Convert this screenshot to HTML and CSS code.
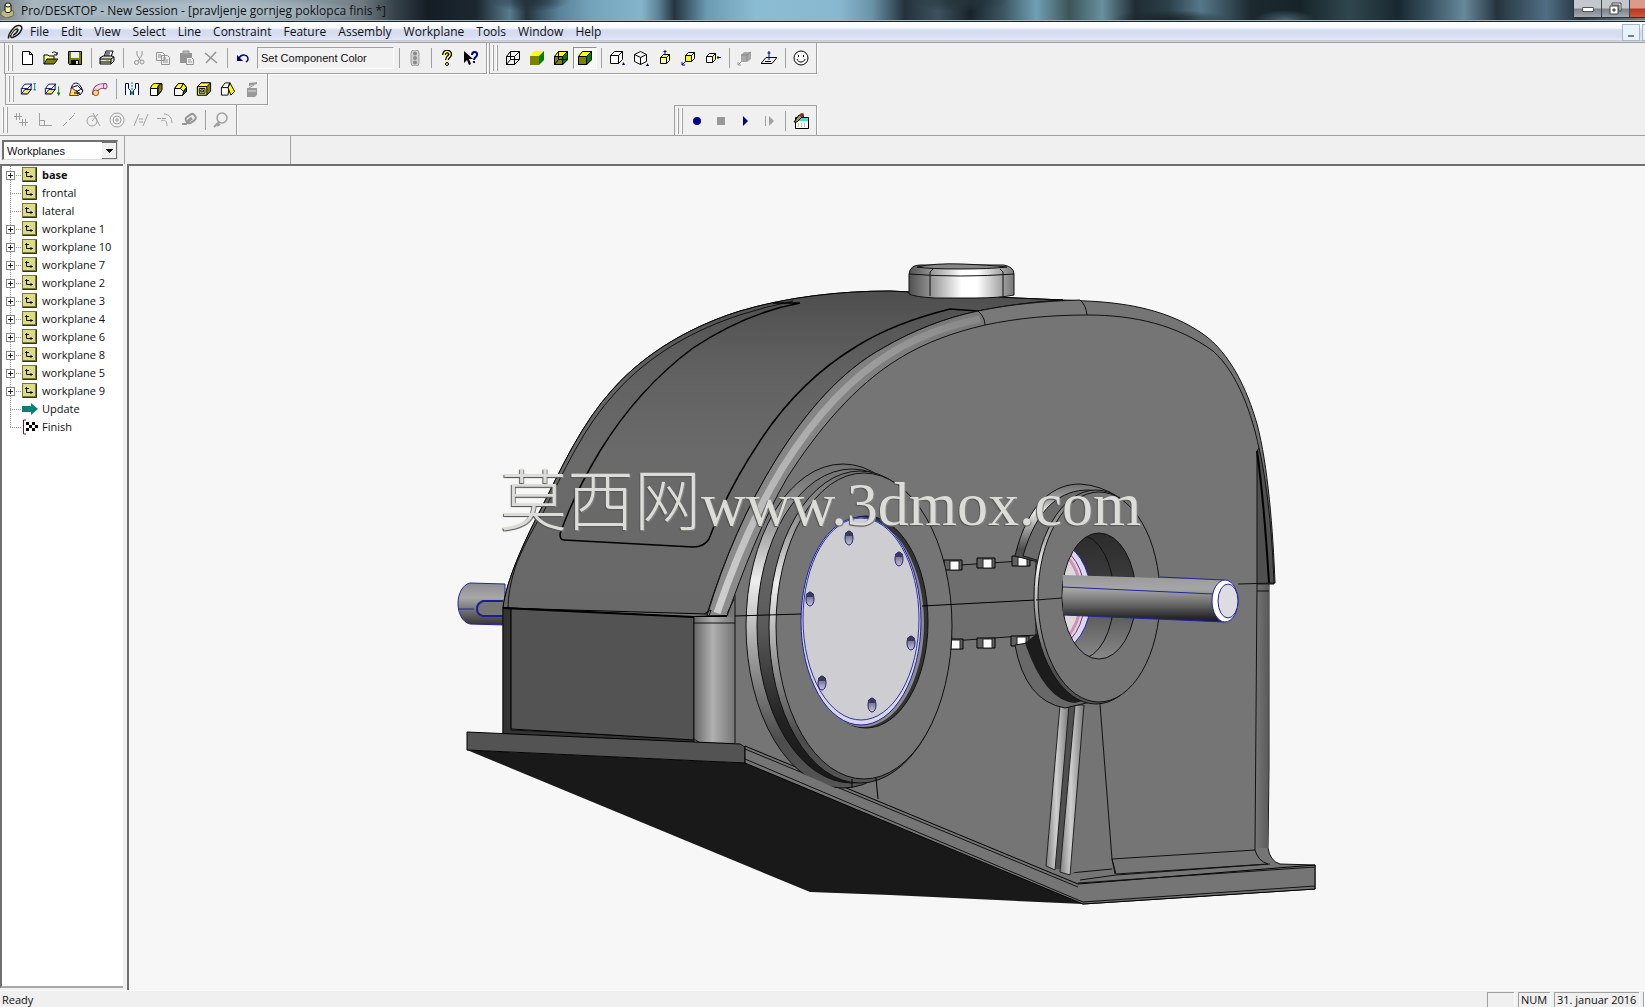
FILE: index.html
```html
<!DOCTYPE html>
<html lang="en">
<head>
<meta charset="utf-8">
<title>Pro/DESKTOP - New Session</title>
<link rel="stylesheet" href="styles.css">
</head>
<body>
<svg class="sprite" aria-hidden="true">
  <defs>
    <symbol id="app" viewBox="0 0 16 16"><path d="M1 10l4-3 9 2-1 5-7 2-5-3z" fill="#b9b98a" stroke="#6d6d4e"/><path d="M5 3v6c0 2 6 2 6 0V3z" fill="#f4f2a4" stroke="#111"/><ellipse cx="8" cy="3" rx="3" ry="2" fill="#ffffd0" stroke="#111"/></symbol>
    <symbol id="clip" viewBox="0 0 16 16"><path d="M1.500 14.500C1 10 7 2 11 1.500c3-.5 4.500 2 3.500 4-1.500 4-6 7-9 8-2 .5-2.500-2-1-4 1.500-2.500 4-4.500 5.500-4.500s1 2-1 4-3 2-3 2" fill="none" stroke="#1a1a1a" stroke-width="1.500"/><path d="M3 11C5 7 8 4 11 3" stroke="#d8d878" fill="none"/></symbol>
    <symbol id="new" viewBox="0 0 16 16"><path d="M3.500 1.500h7l3 3v10h-10z" fill="#fff" stroke="#000"/><path d="M10.500 1.500v3h3" fill="none" stroke="#000"/></symbol>
    <symbol id="open" viewBox="0 0 16 16"><path d="M1 14V5h4l1 1h5v3" fill="#ffffa0" stroke="#000"/><path d="M1 14l3-5h11l-4 5z" fill="#808000" stroke="#000"/><path d="M9 3c2-2 4-1 5 1m0-2v3h-3" fill="none" stroke="#000"/></symbol>
    <symbol id="save" viewBox="0 0 16 16"><path d="M1.500 1.500h13v13h-12l-1-1z" fill="#808000" stroke="#000"/><path d="M4 2h8v6H4z" fill="#eee"/><path d="M4 10h8v5H4z" fill="#000"/><path d="M9 11h2v3H9z" fill="#ddd"/></symbol>
    <symbol id="print" viewBox="0 0 16 16"><path d="M5 7l2-6h7l-2 6" fill="#fff" stroke="#000"/><path d="M7 3h4M6.500 5h4" stroke="#000"/><path d="M1 8l3-2h9l2 1v4l-3 3H1z" fill="#ddd" stroke="#000"/><path d="M1 9h11l3-2M1 12h11M12 9v5" stroke="#000" fill="none"/><path d="M7 10.500h3" stroke="#c8c800"/></symbol>
    <symbol id="cut" viewBox="0 0 16 16"><path d="M6 1v4l4 6M11 1v4l-4 6" fill="none" stroke="#949494"/><circle cx="5.500" cy="12.500" r="2" fill="none" stroke="#949494"/><circle cx="11" cy="12" r="2" fill="none" stroke="#949494"/></symbol>
    <symbol id="copy" viewBox="0 0 16 16"><path d="M1.500 2.500h6l2 2v6h-8zM6.500 5.500h6l2 2v7h-8z" fill="#eee" stroke="#949494"/><path d="M3 5h3M3 7h3M8 8h3M8 10h5M8 12h5" stroke="#949494"/></symbol>
    <symbol id="paste" viewBox="0 0 16 16"><path d="M1 3h12v10H1z" fill="#949494"/><path d="M4 1h6v3H4z" fill="#b8b8b8" stroke="#949494"/><path d="M7.500 7.500h5l2 2v5h-7z" fill="#f2f2f2" stroke="#949494"/><path d="M9 10h3M9 12h4" stroke="#949494"/></symbol>
    <symbol id="del" viewBox="0 0 16 16"><path d="M2 3l12 10M13 2L3 13" stroke="#949494" stroke-width="1.500"/></symbol>
    <symbol id="undo" viewBox="0 0 16 16"><path d="M4 8c3-5 9-3 9 1 0 2-1 2-2 3" fill="none" stroke="#000080" stroke-width="1.500"/><path d="M2 5v6h6z" fill="#000080"/></symbol>
    <symbol id="traffic" viewBox="0 0 16 16"><rect x="4" y="0" width="8" height="16" rx="3" fill="#d0d0d0" stroke="#a0a0a0"/><circle cx="8" cy="3.500" r="2" fill="#8c8c8c"/><circle cx="8" cy="8" r="2" fill="#8c8c8c"/><circle cx="8" cy="12.500" r="2" fill="#8c8c8c"/></symbol>
    <symbol id="help" viewBox="0 0 16 16"><path d="M5 5c0-5 7-4 6 0-1 2-3 2-3 5" fill="none" stroke="#000" stroke-width="4"/><path d="M5 5c0-5 7-4 6 0-1 2-3 2-3 5" fill="none" stroke="#ffff50" stroke-width="1.500"/><circle cx="8" cy="14" r="1.500" fill="#ffff50" stroke="#000"/></symbol>
    <symbol id="what" viewBox="0 0 16 16"><path d="M1 1v12l3-3 2 5 2-1-2-5h4z" fill="#000"/><path d="M9 5c0-4 6-4 5 0 0 2-3 2-3 5M11 11v2" fill="none" stroke="#000080" stroke-width="2"/></symbol>
    <symbol id="wire" viewBox="0 0 16 16"><path d="M1.500 6.500h8v8h-8zM5.500 1.500h9v8h-9zM1.500 6.500l4-5M9.500 6.500l5-5M9.500 14.500l5-5M1.500 14.500l4-5" fill="none" stroke="#000"/></symbol>
    <symbol id="solid" viewBox="0 0 16 16"><path d="M1 6h9v9H1z" fill="#808000"/><path d="M1 6l4-5h10l-5 5z" fill="#ffff00"/><path d="M10 6l5-5v9l-5 5z" fill="#008000"/></symbol>
    <symbol id="solidwire" viewBox="0 0 16 16"><use href="#solid"/><use href="#wire"/></symbol>
    <symbol id="edge" viewBox="0 0 16 16"><use href="#solid"/><path d="M1.500 6.500h8v8h-8zl4-5h9l-5 5m0 8l5-5v-8" fill="none" stroke="#000"/></symbol>
    <symbol id="box" viewBox="0 0 16 16"><path d="M1.500 5.500h8v8h-8zl4-4h8l-4 4m0 8l4-4v-8" fill="#fafafa" stroke="#000"/><path d="M13 15l1.500-3 1.500 3z" fill="#0000a0"/></symbol>
    <symbol id="iso" viewBox="0 0 16 16"><path d="M1.500 4.500l6-3 6 3v7l-6 3-6-3zl6 3 6-3m-6 3v7" fill="#fafafa" stroke="#000"/><path d="M13 16l1.500-3 1.500 3z" fill="#0000a0"/></symbol>
    <symbol id="top" viewBox="0 0 16 16"><path d="M3.500 7.500h6v6h-6zm6 6l3-3v-6l-3 3" fill="#ffffa0" stroke="#000"/><path d="M3.500 7.500l3-3h6l-3 3z" fill="#ffff00" stroke="#000"/><path d="M8 0v5M6.500 1.500h3" stroke="#0000a0"/></symbol>
    <symbol id="front" viewBox="0 0 16 16"><path d="M4.500 5.500l3-3h6v6l-3 3z" fill="#fafafa" stroke="#000"/><path d="M4.500 5.500h6v6h-6z" fill="#ffff00" stroke="#000"/><path d="M10.500 5.500l3-3" stroke="#000"/><path d="M1 15l3-3M1 12v3h3" stroke="#0000a0" fill="none"/></symbol>
    <symbol id="right" viewBox="0 0 16 16"><path d="M1.500 6.500h6v6h-6zl3-3h6l-3 3" fill="#fafafa" stroke="#000"/><path d="M7.500 6.500l3-3v6l-3 3z" fill="#ffff00" stroke="#000"/><path d="M12 7.500h4M13 6v3" stroke="#0000a0"/></symbol>
    <symbol id="graybox" viewBox="0 0 16 16"><path d="M4 5l3-3h7v7l-4 3H4z" fill="#a8a8a8"/><path d="M4 5h6v6M10 5l4-3" stroke="#8a8a8a" fill="none"/><path d="M1 15l4-4M1 12v3h3" stroke="#999" fill="none"/></symbol>
    <symbol id="plane" viewBox="0 0 16 16"><path d="M0 13.500l5-6h11l-5 6zM4 11.500h6" fill="none" stroke="#000"/><path d="M8 1v9M6.500 3h3" stroke="#0000a0"/></symbol>
    <symbol id="smile" viewBox="0 0 16 16"><circle cx="8" cy="8" r="7" fill="#fafafa" stroke="#000"/><path d="M5 6h1M10 6h1" stroke="#000" stroke-width="2"/><path d="M4 9c1 4 7 4 8 0" fill="none" stroke="#000"/></symbol>
    <symbol id="extrude" viewBox="0 0 18 16"><path d="M1.500 7.500h7v6h-7zl4-5h8l-5 5m0 6l4-5V2.500" fill="#fafafa" stroke="#000080"/><path d="M1.500 13.500h7l4-5H5.500z" fill="#e8e870" stroke="#000"/><path d="M15 2h3M16.500 2v7M15 9h3" stroke="#008080"/></symbol>
    <symbol id="project" viewBox="0 0 18 16"><path d="M1.500 7.500h7v6h-7zl4-5h8l-5 5m0 6l4-5V2.500" fill="#fafafa" stroke="#000080"/><path d="M1.500 13.500h7l4-5H5.500z" fill="#e8e870" stroke="#000"/><path d="M16.500 5v8" stroke="#008000"/><path d="M14.500 12h4l-2 4z" fill="#008000"/></symbol>
    <symbol id="revolve" viewBox="0 0 16 16"><path d="M3 8C4 1 10 0 13 6l2 4-3 4-3-4z" fill="#f4f4f4" stroke="#000060"/><path d="M1.500 14.500l2-8 5 4 2 4z" fill="#ffe060" stroke="#803030"/><path d="M3.500 6.500l6-2 5 5M8.500 10.500l4-2M6 12h6" stroke="#000" fill="none"/></symbol>
    <symbol id="sweep" viewBox="0 0 17 16"><path d="M3 14c0-7 4-10 12-9" fill="none" stroke="#804080" stroke-width="6"/><path d="M3 14c0-7 4-10 12-9" fill="none" stroke="#f4dce0" stroke-width="4"/><circle cx="4" cy="12" r="3" fill="#ffe060" stroke="#b03030"/><ellipse cx="14" cy="5" rx="2" ry="3" fill="none" stroke="#804080"/></symbol>
    <symbol id="hole" viewBox="0 0 16 16"><path d="M1.500 14V2.500h3v5l2 2V14M14.500 14V2.500h-3v5l-2 2V14" fill="#fafafa" stroke="#000060"/><path d="M8 1v12" stroke="#008080" stroke-dasharray="2 1"/><path d="M6 11h4l-2 3z" fill="#008080"/></symbol>
    <symbol id="round" viewBox="0 0 16 16"><path d="M2.500 7.500h7v7h-7zM9.500 14.500l4-5v-5" fill="#fff" stroke="#000"/><path d="M2.500 7.500c1-4 3-5 5-5h6c-3 1-4 2-4 5z" fill="#ffff00" stroke="#000"/><path d="M10 8c0-3 2-5 4-5v6l-4 5z" fill="#808000" stroke="#000"/></symbol>
    <symbol id="chamfer" viewBox="0 0 16 16"><path d="M2.500 7.500l4-5h5l3 4v4l-4 4h-8z" fill="#fff" stroke="#000"/><path d="M6.500 2.500h5l-3 5h-6z" fill="#ffff60" stroke="#000"/><path d="M11.500 2.500l3 4-3 4-3-3z" fill="#ffff00" stroke="#000"/><path d="M11.500 10.500l3-4v4l-4 4z" fill="#106010" stroke="#000"/></symbol>
    <symbol id="shell" viewBox="0 0 17 16"><path d="M1.500 5.500l4-4h10v9l-4 4h-10z" fill="#808000" stroke="#000"/><path d="M1.500 5.500l4-4h10l-4 4z" fill="#ffff50" stroke="#000"/><path d="M1.500 5.500h10v9h-10z" fill="#ffff50" stroke="#000"/><path d="M3.500 7.500h6v5h-6z" fill="#fff" stroke="#000"/><path d="M5 9h3v2H5z" fill="none" stroke="#000"/></symbol>
    <symbol id="draft" viewBox="0 0 17 16"><path d="M1.500 6.500l4-5h5l-2 13h-7z" fill="#fafafa" stroke="#000"/><path d="M10.500 1.500l5 9-4 4-3-8z" fill="#ffff00" stroke="#000"/><path d="M1.500 6.500h7l2-5" fill="none" stroke="#000"/></symbol>
    <symbol id="stack" viewBox="0 0 16 16"><path d="M5 2l8-1v2L5 5zM3 7h10v7l-2 2H3z" fill="#999"/><path d="M4 10h8" stroke="#ddd"/><path d="M10 4l-5 3" stroke="#999"/></symbol>
    <symbol id="c1" viewBox="0 0 16 16"><path d="M1 4.500h8M3.500 1v7M6.500 1v7M6 10.500h9M9.500 7v7M12.500 7v7" stroke="#a0a0a0"/></symbol>
    <symbol id="c2" viewBox="0 0 16 16"><path d="M2.500 1v12.500H15M2.500 8.500h5v5" fill="none" stroke="#a0a0a0"/></symbol>
    <symbol id="c3" viewBox="0 0 16 16"><path d="M2 14l4-4M8 8l5-5M13 2l1-1" stroke="#a0a0a0"/></symbol>
    <symbol id="c4" viewBox="0 0 16 16"><circle cx="7" cy="9" r="5" fill="none" stroke="#a0a0a0"/><path d="M8 1l7 13M7 9l6-7" stroke="#a0a0a0"/></symbol>
    <symbol id="c5" viewBox="0 0 16 16"><circle cx="8" cy="8" r="7" fill="none" stroke="#a0a0a0"/><circle cx="8" cy="8" r="4" fill="none" stroke="#a0a0a0"/><path d="M6 8h4M8 6v4" stroke="#a0a0a0"/></symbol>
    <symbol id="c6" viewBox="0 0 16 16"><path d="M1 14L6 2M10 14l5-12M6 7h4M6 10h4" stroke="#a0a0a0"/></symbol>
    <symbol id="c7" viewBox="0 0 16 16"><path d="M0 6.500h4M5 6.500h4M4 9c4-2 6 0 6 5M7 2c5 0 8 4 8 9" fill="none" stroke="#a0a0a0"/></symbol>
    <symbol id="c8" viewBox="0 0 16 16"><path d="M1 12h5" stroke="#989898" stroke-width="2"/><rect x="5" y="3" width="10" height="7" rx="3" transform="rotate(-35 10 7)" fill="none" stroke="#989898" stroke-width="2"/><path d="M6 10l5-4" stroke="#989898" stroke-width="3"/></symbol>
    <symbol id="c9" viewBox="0 0 16 16"><circle cx="9" cy="6" r="5" fill="none" stroke="#a0a0a0" stroke-width="1.500"/><path d="M1 15l5-5M4 14l3-2" stroke="#a0a0a0" stroke-width="2"/></symbol>
    <symbol id="rec" viewBox="0 0 16 16"><circle cx="8" cy="8" r="4" fill="#000080"/></symbol>
    <symbol id="stop" viewBox="0 0 16 16"><path d="M4 4h8v8H4z" fill="#999"/></symbol>
    <symbol id="play" viewBox="0 0 16 16"><path d="M6 3l5 5-5 5z" fill="#000080"/></symbol>
    <symbol id="step" viewBox="0 0 16 16"><path d="M4 3h1v10H4zM8 3l5 5-5 5z" fill="#a0a0a0"/></symbol>
    <symbol id="macro" viewBox="0 0 16 16"><path d="M2.500 4.500h13v11h-13z" fill="#fff" stroke="#000"/><path d="M3 5h12v3H3z" fill="#40e0e0"/><path d="M5 11h1M8 11h1M11 11h1M5 13h1M8 13h1M11 13h1" stroke="#888"/><path d="M1 9l5-7 5 1-3 2-4 4z" fill="#a0a040" stroke="#000"/><circle cx="9" cy="2" r="2" fill="#a02020"/></symbol>
    <symbol id="wp" viewBox="0 0 16 16"><path d="M0 0h15v15H0z" fill="#76763c"/><path d="M1 1h12v12H1z" fill="#dcdc82"/><path d="M14.500 1v13.500H1" stroke="#33331a" fill="none"/><path d="M4.500 4v5.500H11M3 5.500h4M9 8v3" stroke="#111" fill="none"/></symbol>
    <symbol id="update" viewBox="0 0 16 16"><path d="M0 5h9V2l7 6-7 6v-3H0z" fill="#0a8078"/></symbol>
    <symbol id="finish" viewBox="0 0 16 16"><path d="M4 1H1.500v14H4" fill="none" stroke="#602030"/><path d="M4 3h12v10H4z" fill="#fff"/><path d="M4 3h3v3H4zM10 3h3v3h-3zM7 6h3v3H7zM13 6h3v3h-3zM4 9h3v3H4zM10 9h3v3h-3z" fill="#000"/></symbol>
  </defs>
</svg>

<div class="app">
  <header class="titlebar">
    <svg class="ico"><use href="#app"/></svg>
    <h1 class="caption">Pro/DESKTOP - New Session - [pravljenje gornjeg poklopca finis *]</h1>
    <div class="winbtns">
      <button class="winbtn" aria-label="Minimize"><svg width="12" height="6"><path d="M.5 1.500h11v4H.5z" fill="#fff" stroke="#555"/></svg></button>
      <button class="winbtn" aria-label="Restore"><svg width="13" height="13"><path d="M3 1h9v8h-2V3H3zM1 4h8v8H1zm3 3v2h2V7z" fill="#fff" fill-rule="evenodd" stroke="#444"/></svg></button>
      <button class="winbtn close" aria-label="Close"></button>
    </div>
  </header>

  <nav class="menubar" aria-label="Menu">
    <svg class="ico"><use href="#clip"/></svg>
    <button>File</button><button>Edit</button><button>View</button><button>Select</button><button>Line</button><button>Constraint</button><button>Feature</button><button>Assembly</button><button>Workplane</button><button>Tools</button><button>Window</button><button>Help</button>
    <div class="mdi"><button aria-label="Minimize document"></button><button aria-label="Restore document"></button></div>
  </nav>

  <div class="toolrow">
    <div class="toolbar first">
      <button aria-label="New"><svg><use href="#new"/></svg></button><button aria-label="Open"><svg><use href="#open"/></svg></button><button aria-label="Save"><svg><use href="#save"/></svg></button><i></i>
      <button aria-label="Print"><svg><use href="#print"/></svg></button><i></i>
      <button aria-label="Cut"><svg><use href="#cut"/></svg></button><button aria-label="Copy"><svg><use href="#copy"/></svg></button><button aria-label="Paste"><svg><use href="#paste"/></svg></button><button aria-label="Delete"><svg><use href="#del"/></svg></button><i></i>
      <button aria-label="Undo"><svg><use href="#undo"/></svg></button>
      <input class="action" aria-label="Last action" value="Set Component Color" readonly><i></i>
      <button aria-label="Stop update"><svg><use href="#traffic"/></svg></button><i></i>
      <button aria-label="Help"><svg><use href="#help"/></svg></button><button aria-label="What is this"><svg><use href="#what"/></svg></button>
    </div>
    <div class="toolbar views">
      <button aria-label="Wireframe"><svg><use href="#wire"/></svg></button><button aria-label="Shaded"><svg><use href="#solid"/></svg></button><button aria-label="Transparent"><svg><use href="#solidwire"/></svg></button><button class="on" aria-label="Enhanced"><svg><use href="#edge"/></svg></button><i></i>
      <button aria-label="Trimetric"><svg><use href="#box"/></svg></button><button aria-label="Isometric"><svg><use href="#iso"/></svg></button><button aria-label="Plan"><svg><use href="#top"/></svg></button><button aria-label="Front"><svg><use href="#front"/></svg></button><button aria-label="Right"><svg><use href="#right"/></svg></button><i></i>
      <button aria-label="Onto face"><svg><use href="#graybox"/></svg></button><button aria-label="Onto workplane"><svg><use href="#plane"/></svg></button><i></i>
      <button aria-label="Album"><svg><use href="#smile"/></svg></button>
    </div>
  </div>

  <div class="toolrow">
    <div class="toolbar features">
      <button aria-label="Extrude"><svg><use href="#extrude"/></svg></button><button aria-label="Project"><svg><use href="#project"/></svg></button><button aria-label="Revolve"><svg><use href="#revolve"/></svg></button><button aria-label="Sweep"><svg><use href="#sweep"/></svg></button><i></i>
      <button aria-label="Hole"><svg><use href="#hole"/></svg></button><button aria-label="Round"><svg><use href="#round"/></svg></button><button aria-label="Chamfer"><svg><use href="#chamfer"/></svg></button><button aria-label="Shell"><svg><use href="#shell"/></svg></button><button aria-label="Draft"><svg><use href="#draft"/></svg></button><button aria-label="Deform"><svg><use href="#stack"/></svg></button>
    </div>
  </div>

  <div class="toolrow last">
    <div class="toolbar constraints">
      <button aria-label="Dimension"><svg><use href="#c1"/></svg></button><button aria-label="Perpendicular"><svg><use href="#c2"/></svg></button><button aria-label="Collinear"><svg><use href="#c3"/></svg></button><button aria-label="Tangent"><svg><use href="#c4"/></svg></button><button aria-label="Concentric"><svg><use href="#c5"/></svg></button><button aria-label="Parallel"><svg><use href="#c6"/></svg></button><button aria-label="Radius"><svg><use href="#c7"/></svg></button><button aria-label="Fix"><svg><use href="#c8"/></svg></button><i></i>
      <button aria-label="Inspect"><svg><use href="#c9"/></svg></button>
    </div>
    <div class="toolbar macro">
      <button aria-label="Record"><svg><use href="#rec"/></svg></button><button aria-label="Stop"><svg><use href="#stop"/></svg></button><button aria-label="Play"><svg><use href="#play"/></svg></button><button aria-label="Step"><svg><use href="#step"/></svg></button><i></i>
      <button aria-label="Macros"><svg><use href="#macro"/></svg></button>
    </div>
  </div>

  <div class="work">
    <aside class="browser">
      <div class="picker">
        <select aria-label="Browser contents"><option>Workplanes</option></select>
      </div>
      <ul class="tree">
        <li class="has bold"><svg><use href="#wp"/></svg>base</li>
        <li><svg><use href="#wp"/></svg>frontal</li>
        <li><svg><use href="#wp"/></svg>lateral</li>
        <li class="has"><svg><use href="#wp"/></svg>workplane 1</li>
        <li class="has"><svg><use href="#wp"/></svg>workplane 10</li>
        <li class="has"><svg><use href="#wp"/></svg>workplane 7</li>
        <li class="has"><svg><use href="#wp"/></svg>workplane 2</li>
        <li class="has"><svg><use href="#wp"/></svg>workplane 3</li>
        <li class="has"><svg><use href="#wp"/></svg>workplane 4</li>
        <li class="has"><svg><use href="#wp"/></svg>workplane 6</li>
        <li class="has"><svg><use href="#wp"/></svg>workplane 8</li>
        <li class="has"><svg><use href="#wp"/></svg>workplane 5</li>
        <li class="has"><svg><use href="#wp"/></svg>workplane 9</li>
        <li><svg><use href="#update"/></svg>Update</li>
        <li><svg><use href="#finish"/></svg>Finish</li>
      </ul>
    </aside>
    <section class="design">
      <div class="ruler"><span></span></div>
      <main class="viewport">
        <svg class="model" viewBox="129 166 1516 822" role="img" aria-label="Gearbox housing">
          <defs>
            <linearGradient id="gTop" x1="0" y1="290" x2="0" y2="610" gradientUnits="userSpaceOnUse"><stop offset="0" stop-color="#4e4e4e"/><stop offset=".25" stop-color="#616161"/><stop offset=".5" stop-color="#6a6a6a"/><stop offset="1" stop-color="#686868"/></linearGradient>
            <linearGradient id="gRim" x1="720" y1="600" x2="1000" y2="300" gradientUnits="userSpaceOnUse"><stop offset="0" stop-color="#8c8c8c"/><stop offset=".5" stop-color="#848484"/><stop offset="1" stop-color="#787878"/></linearGradient>
            <linearGradient id="gShine" x1="720" y1="600" x2="1000" y2="310" gradientUnits="userSpaceOnUse"><stop offset="0" stop-color="#cecece"/><stop offset=".4" stop-color="#b0b0b0"/><stop offset="1" stop-color="#848484"/></linearGradient>
            <linearGradient id="gCol"><stop offset="0" stop-color="#686868"/><stop offset=".45" stop-color="#b0b0b0"/><stop offset="1" stop-color="#757575"/></linearGradient>
            <linearGradient id="gCap"><stop offset="0" stop-color="#505050"/><stop offset=".2" stop-color="#909090"/><stop offset=".5" stop-color="#fff"/><stop offset=".65" stop-color="#fff"/><stop offset="1" stop-color="#777"/></linearGradient>
            <linearGradient id="gShaft" x1="0" y1="0" x2="0" y2="1"><stop offset="0" stop-color="#999"/><stop offset=".3" stop-color="#a6a6a6"/><stop offset=".55" stop-color="#777"/><stop offset=".9" stop-color="#282828"/><stop offset="1" stop-color="#141450"/></linearGradient>
            <linearGradient id="gStub" x1="0" y1="0" x2="0" y2="1"><stop offset="0" stop-color="#8c8c94"/><stop offset=".35" stop-color="#a8a8a8"/><stop offset="1" stop-color="#333"/></linearGradient>
            <linearGradient id="gRing" x1="0" y1="0" x2="0" y2="1"><stop offset="0" stop-color="#707070"/><stop offset=".2" stop-color="#a0a0a0"/><stop offset=".36" stop-color="#eee"/><stop offset=".6" stop-color="#999"/><stop offset=".85" stop-color="#4c4c4c"/><stop offset="1" stop-color="#555"/></linearGradient>
            <linearGradient id="gWall" x1="0" y1="0" x2="0" y2="1"><stop offset="0" stop-color="#777"/><stop offset=".5" stop-color="#5a5a5a"/><stop offset=".8" stop-color="#222"/><stop offset="1" stop-color="#181818"/></linearGradient>
            <linearGradient id="gBore" x1="0" y1="0" x2="0" y2="1"><stop offset="0" stop-color="#2b2b2b"/><stop offset=".4" stop-color="#3c3c3c"/><stop offset="1" stop-color="#8a8a8a"/></linearGradient>
            <linearGradient id="gHole" x1="0" y1="0" x2="0" y2="1"><stop offset="0" stop-color="#33334a"/><stop offset=".35" stop-color="#77778c"/><stop offset="1" stop-color="#c8c8e4"/></linearGradient>
            <linearGradient id="gPipe"><stop offset="0" stop-color="#808080"/><stop offset=".45" stop-color="#cfcfcf"/><stop offset="1" stop-color="#777"/></linearGradient>
            <linearGradient id="gSide"><stop offset="0" stop-color="#777"/><stop offset="1" stop-color="#595959"/></linearGradient>
            <clipPath id="boreClip"><ellipse cx="1099" cy="595" rx="37" ry="63"/></clipPath>
            <clipPath id="bossClip"><path d="M700 440h300v420L745 747z"/></clipPath>
            <g id="nut"><path d="M-9-5H9V5H-9z" fill="#606060" stroke="#000"/><path d="M-3-4H6V5H-3z" fill="#fff" stroke="#222"/></g>
            <g id="bolt"><ellipse rx="4" ry="7" fill="url(#gHole)" stroke="#202080"/><path d="M-4-2V-5L0-7 4-5V-2z" fill="#3a3a60"/></g>
          </defs>

          <!-- input shaft stub -->
          <path d="M505 583L470 582C454 586 454 619 470 623L505 624z" fill="url(#gStub)" stroke="#2424a0"/>
          <path d="M503 600H483c-8 3-8 13 0 15h20" fill="#777" stroke="#1c1c9c" stroke-width="2"/><path d="M458 608h16" stroke="#2424a0"/>

          <!-- housing outline and front face -->
          <path d="M503 607C506 580 524 541 540 510C561 468 581 423 613 388C646 351 692 325 740 310C787 296 840 290 890 290L910 291 1017 297 1087 300C1130 302 1170 310 1203 333C1230 352 1247 388 1257 423C1268 464 1273 530 1275 582H1269V767L1268 847Q1270 860 1280 863L1315 864V888L1083 903 745 762 503 733z" fill="#757575" stroke="#111"/>
          <path d="M1257 450V583H1274C1273 550 1269 490 1259 447z" fill="#505050" stroke="#111"/>
          <path d="M1257 450Q1264 500 1269 582" fill="none" stroke="#000" stroke-width="2"/>
          <path d="M1257 584H1269L1268 847H1255z" fill="url(#gSide)"/>
          <path d="M1257 583L1255 849M1257 590H1269" fill="none" stroke="#111"/>

          <!-- curved top skin -->
          <path d="M503 607C506 580 524 541 540 510C561 468 581 423 613 388C646 351 692 325 740 310C787 296 840 290 890 290L910 291 1017 297 1063 299C1046 300 1012 303 978 310C945 317 914 329 883 347C841 370 806 411 777 457C747 505 724 558 707 613z" fill="url(#gTop)" stroke="#000"/>
          <path d="M508 607Q508 590 515 567C521 550 534 525 543 512C564 470 584 425 616 391C649 354 695 328 743 313Q765 306 793 300" fill="none" stroke="#111"/>
          <path d="M773 302L800 302C762 309 726 325 693 347C654 376 624 411 600 450C582 480 570 504 560 533Q560 539 564 539L693 546Q704 546 709 538C722 503 740 470 760 440C786 400 819 368 857 345C886 327 918 316 950 308L978 310" fill="none" stroke="#000" stroke-width="1.500"/>

          <!-- rounded rim -->
          <path d="M707 615C724 558 747 505 777 457C806 411 841 370 883 347C914 329 945 317 978 310C1012 303 1046 300 1080 299Q1086 304 1087 314C1052 314 1018 317 985 324C955 331 926 341 900 357C855 384 817 430 787 477C762 520 743 570 727 615z" fill="url(#gRim)" stroke="#111"/>
          <path d="M717 612C734 562 754 513 783 466C812 420 848 378 891 352C922 333 950 324 980 318" fill="none" stroke="url(#gShine)" stroke-width="7"/>
          <path d="M978 310Q985 316 985 324M1087 314C1135 314 1177 324 1213 350C1238 372 1252 414 1259 447" fill="none" stroke="#111"/>

          <!-- filler cap -->
          <path d="M909 273Q910 264 920 264H1004Q1014 266 1014 273V294Q1000 297 975 297H935Q915 296 909 293z" fill="url(#gCap)" stroke="#111"/>
          <path d="M917 266Q935 262 962 263T1007 266Q990 268 960 268T917 266z" fill="#868686" stroke="#111"/>
          <path d="M909 273Q960 277 1014 273M930 295V271L933 268M1003 295V271L1000 268" fill="none" stroke="#111"/>

          <!-- lower left block -->
          <path d="M503 607L511 607V729L694 738V744L503 733z" fill="#333" stroke="#111"/>
          <path d="M511 607L694 616V739L511 728z" fill="#535353" stroke="#000"/>
          <path d="M503 607L694 616 727 615" fill="none" stroke="#000" stroke-width="2"/>
          <path d="M694 616H735V742L700 741 694 738z" fill="url(#gCol)"/><path d="M694 616V738L700 742M735 594V742M694 622H735M704 613l7-4-2 6M727 613l7-15" fill="none" stroke="#111"/>

          <!-- base plate -->
          <path d="M467 749L745 762 1083 903 890 894 810 891z" fill="#191919"/>
          <path d="M467 731L740 743 745 746V762L467 749z" fill="#535353" stroke="#000"/>
          <path d="M745 745L1078 883 1315 864V888L1083 903 745 762z" fill="#757575" stroke="#000"/>
          <path d="M745 748L1078 886M745 758L1083 901 1315 885M1078 882L1315 866M1070 872L1112 868M1112 858L1255 849Q1258 860 1268 863L1116 873zM1080 879L1116 874 1270 863" fill="none" stroke="#111"/>

          <!-- cover plate between bosses -->
          <path d="M945 565L1036 559V634L952 640z" fill="#6e6e6e" stroke="#111"/>
          <use href="#nut" x="953" y="564"/><use href="#nut" x="986" y="562"/><use href="#nut" x="1021" y="560"/>
          <use href="#nut" x="954" y="643"/><use href="#nut" x="986" y="642"/><use href="#nut" x="1020" y="640"/>

          <!-- large bearing boss -->
          <g clip-path="url(#bossClip)">
            <ellipse cx="843" cy="625" rx="97" ry="162" fill="url(#gRing)" stroke="#111"/>
            <ellipse cx="852" cy="625" rx="95" ry="157" fill="url(#gWall)" stroke="#111"/>
          </g>
          <ellipse cx="860" cy="626" rx="91" ry="156" fill="url(#gRing)" stroke="#111"/>
          <ellipse cx="864" cy="625" rx="88" ry="153" fill="#757575" stroke="#111"/>
          <ellipse cx="866" cy="621" rx="62" ry="106" fill="#333" stroke="#111"/>
          <ellipse cx="863" cy="622" rx="61" ry="104" fill="#8c8c90"/>
          <ellipse cx="861" cy="620" rx="60" ry="104" fill="#d8d8e8" stroke="#2020a0"/>
          <ellipse cx="861" cy="618" rx="58" ry="101" fill="#cecdd1" stroke="#3030a0"/>
          <use href="#bolt" x="849" y="537"/><use href="#bolt" x="899" y="558"/><use href="#bolt" x="810" y="598"/><use href="#bolt" x="911" y="642"/><use href="#bolt" x="822" y="682"/><use href="#bolt" x="872" y="704"/>
          <path d="M735 615L801 613M922 605L1036 599M852 778V787M876 777L878 798" stroke="#000" fill="none"/>

          <!-- stiffening rib -->
          <path d="M1060 704L1046 865 1070 873 1112 858 1100 703z" fill="#747474"/>
          <path d="M1068 704L1054 868H1062L1075 704z" fill="#505050"/>
          <path d="M1060 704h9L1055 869 1046 865z" fill="url(#gPipe)" stroke="#222"/>
          <path d="M1075 704h9L1070 874 1060 871z" fill="url(#gPipe)" stroke="#222"/>
          <path d="M1100 703L1112 858 1115 873" fill="none" stroke="#111"/>

          <!-- small bearing boss -->
          <path d="M1015 555C1028 500 1055 483 1080 483Q1100 484 1120 497L1120 560H1034z" fill="url(#gRing)" stroke="#111"/>
          <path d="M1015 644Q1025 700 1065 707L1095 700 1040 640z" fill="#686868" stroke="#111"/>
          <path d="M1025 642Q1045 700 1075 702L1090 698 1040 630z" fill="#1c1c1c"/>
          <path d="M1023 555C1037 505 1062 489 1088 489L1100 490 1040 560z" fill="#6b6b6b" stroke="#111"/>
          <ellipse cx="1096" cy="596" rx="62" ry="107" fill="url(#gRing)" stroke="#111"/>
          <ellipse cx="1099" cy="596" rx="61" ry="105" fill="#757575" stroke="#111"/>
          <path d="M1036 599L1062 597" stroke="#111"/>
          <g clip-path="url(#boreClip)">
            <path d="M1060 530h80v130h-80z" fill="url(#gBore)"/>
            <ellipse cx="1080" cy="596" rx="34" ry="62" fill="none" stroke="#111"/>
            <ellipse cx="1056" cy="596" rx="35" ry="54" fill="#dcd8f4" stroke="#2424a0"/>
            <ellipse cx="1054" cy="596" rx="31" ry="50" fill="#d8d8dc" stroke="#7c3070"/>
            <ellipse cx="1053" cy="596" rx="28" ry="46" fill="#dcd8dc" stroke="#d090b8" stroke-width="3"/>
          </g>
          <ellipse cx="1099" cy="595" rx="37" ry="63" fill="none" stroke="#111"/>

          <!-- output shaft -->
          <path d="M1063 574L1224 579V621L1063 614z" fill="url(#gShaft)"/>
          <path d="M1160 576L1224 579M1063 586L1213 593M1063 614L1224 621" stroke="#2424a0"/>
          <ellipse cx="1225" cy="600" rx="13" ry="21" fill="#fff" stroke="#2424a0"/>
          <ellipse cx="1228" cy="600" rx="10" ry="17" fill="#dddce0" stroke="#2424a0"/>
          <path d="M1238 583L1274 582" stroke="#111"/>

          <text class="mark" x="500" y="524"><tspan class="han">莫西网</tspan><tspan>www.3dmox.com</tspan></text>
        </svg>
      </main>
    </section>
  </div>

  <footer class="status">
    <span class="ready">Ready</span>
    <span class="pane caps"></span><span class="pane num">NUM</span><span class="pane date">31. januar 2016</span><span class="pane grip"></span>
  </footer>
</div>
</body>
</html>
```
FILE: styles.css
```css
* { box-sizing: border-box; }
body {
  margin: 0;
  background: #f0f0f0;
  color: #111;
  font: 11px/18px "Open Sans", "Noto Sans", sans-serif;
}
button, input, select { font: inherit; color: inherit; margin: 0; }
button { padding: 0; border: 0; background: none; }
.sprite { position: absolute; width: 0; height: 0; }
.app { display: flex; flex-direction: column; height: 100vh; overflow: hidden; }
.ico { flex: none; width: 16px; height: 16px; }

/* title bar */
.titlebar {
  flex: none;
  display: flex;
  align-items: flex-start;
  gap: 5px;
  height: 22px;
  border-bottom: 1px solid #1a242c;
  box-shadow: inset 0 -1px #a8b4bc;
  background:
    radial-gradient(ellipse 180px 14px at 190px 11px, rgba(180, 196, 206, .7) 40%, transparent),
    radial-gradient(ellipse 40px 12px at 530px 0, #24323c, transparent),
    radial-gradient(ellipse 50px 12px at 960px 0, #26343a, transparent),
    radial-gradient(ellipse 60px 10px at 1170px 20px, #182428, transparent),
    radial-gradient(ellipse 30px 10px at 1285px 20px, #4a6470, transparent),
    linear-gradient(90deg, #7b8488 0, #a7b6bf 2%, #8ea2b0 8%, #a2b2be 14%, #8696a0 19%, #6e7a82 22%, #36424a 24%, #141c24 26%, #1c2830 29%, #587c90 31%, #24343e 32%, #5a8298 34%, #74a4bc 36%, #84b4ca 39%, #5c8498 40%, #26343e 41%, #6b9cb4 43%, #8abcd4 46%, #88b8d0 51%, #6a94a8 53%, #24323c 55%, #3c525e 57%, #18242c 59%, #3d5662 61%, #6ea0b4 63%, #3c5458 65%, #68909e 67%, #202c34 69%, #2c3f48 71%, #57788a 73%, #1c2a30 76%, #16242a 79%, #30464e 82%, #182830 85%, #3b5564 87%, #68889c 89%, #25353e 91%, #506e84 94%, #263440 96%, #6f8088 100%);
}
.titlebar .ico { margin-top: 2px; }
.caption { flex: 1; margin: 0; font-size: 12px; font-weight: 400; line-height: 22px; white-space: nowrap; }
.winbtns { display: flex; height: 18px; border: 1px solid #27313a; border-width: 0 0 1px 1px; border-radius: 0 0 0 4px; }
.winbtn { display: flex; align-items: center; justify-content: center; width: 28px; border-right: 1px solid #3a444c; background: linear-gradient(#c4c8cc 45%, #7d848c 55%, #a4aab0); }
.winbtn.close { width: 15px; border: 0; background: linear-gradient(#dc9a8c 45%, #b83820 55%, #d0563a); }

/* menu bar */
.menubar {
  flex: none;
  display: flex;
  align-items: center;
  height: 21px;
  padding-left: 7px;
  border-bottom: 1px solid #a0a0a0;
  background: linear-gradient(#fff 0, #f6f8fd 30%, #d4dcf0 40%, #d8def2 70%, #e4e8f4 90%, #a8acb8 95%, #fff);
}
.menubar > button { margin-left: 12px; font-size: 12px; }
.menubar > .ico + button { margin-left: 7px; }
.mdi { display: flex; gap: 2px; margin-left: auto; }
.mdi button { width: 18px; height: 17px; border: 1px solid #a4b8c8; background: linear-gradient(#708090, #708090) center 10px / 6px 2px no-repeat #e8f2fc; }
.mdi button + button { width: 3px; border-right: 0; background: #e8f2fc; }

/* toolbars */
.toolrow { flex: none; display: flex; height: 31px; }
.toolrow.last { border-bottom: 1px solid #a0a0a0; }
.toolbar {
  display: flex;
  align-items: center;
  padding: 0 3px 0 11px;
  border-right: 1px solid #a0a0a0;
  border-bottom: 1px solid #a0a0a0;
  box-shadow: 1px 1px #fff;
  background:
    linear-gradient(#a0a0a0, #a0a0a0) 3px 2px / 1px 26px no-repeat,
    linear-gradient(#a0a0a0, #a0a0a0) 7px 2px / 1px 26px no-repeat,
    linear-gradient(#fff, #fff) 2px 2px / 1px 26px no-repeat,
    linear-gradient(#fff, #fff) 6px 2px / 1px 26px no-repeat;
}
.toolrow.last .toolbar { border-bottom: 0; box-shadow: 1px 0 #fff; }
.toolbar.first { margin-left: 4px; border-left: 1px solid #a0a0a0; padding-left: 10px; }
.toolbar.views { margin-left: 2px; border-left: 1px solid #a0a0a0; padding-left: 11px; }
.toolbar.features { margin-left: 5px; border-left: 1px solid #a0a0a0; padding-left: 10px; }
.toolbar.constraints { padding-left: 9px; }
.toolbar.macro { margin-left: 437px; border-left: 1px solid #a0a0a0; border-top: 1px solid #a0a0a0; padding-left: 10px; }
.toolbar button { flex: none; display: flex; align-items: center; justify-content: center; width: 24px; height: 22px; }
.toolbar button svg { width: 16px; height: 16px; }
.toolbar button.on { border: 1px solid #909090; border-right-color: #fff; border-bottom-color: #fff; background: #f8f8f8; }
.toolbar i { flex: none; width: 1px; height: 20px; margin: 0 3px 0 4px; background: #a0a0a0; }
.action {
  width: 137px;
  height: 22px;
  margin: 0 1px 0 2px;
  padding: 0 3px;
  border: 1px solid #a0a0a0;
  border-right-color: #fff;
  border-bottom-color: #fff;
  background: #f2f2f2;
  font: 11px "Liberation Sans", Arial, sans-serif;
}

/* browser pane */
.work { flex: 1; display: flex; min-height: 0; }
.browser { flex: none; display: flex; flex-direction: column; width: 125px; }
.picker { flex: none; height: 28px; padding: 4px 0 0 2px; border-right: 1px solid #a0a0a0; }
.picker select {
  width: 116px;
  height: 20px;
  padding: 0 3px;
  appearance: none;
  border: 2px solid #707070;
  border-right: 1px solid #ddd;
  border-bottom: 1px solid #ddd;
  border-radius: 0;
  background:
    linear-gradient(#111, #111) right 4px top 7px / 7px 1px no-repeat,
    linear-gradient(#111, #111) right 5px top 8px / 5px 1px no-repeat,
    linear-gradient(#111, #111) right 6px top 9px / 3px 1px no-repeat,
    linear-gradient(#111, #111) right 7px top 10px / 1px 1px no-repeat,
    linear-gradient(#f0f0f0, #f0f0f0) right 1px top 1px / 14px 15px no-repeat,
    linear-gradient(#707070, #707070) right 0 top 0 / 15px 17px no-repeat,
    #fff;
  font: 11px "Liberation Sans", Arial, sans-serif;
}
.tree {
  flex: 1;
  margin: 0 2px 2px 0;
  padding: 0;
  list-style: none;
  border-top: 2px solid #707070;
  border-left: 2px solid #707070;
  border-bottom: 2px solid #a8a8a8;
  background: #fff;
}
.tree li {
  display: flex;
  align-items: center;
  gap: 4px;
  height: 18px;
  padding-left: 20px;
  white-space: nowrap;
  background:
    repeating-linear-gradient(90deg, #999 0 1px, transparent 1px 2px) 8px 9px / 12px 1px no-repeat,
    repeating-linear-gradient(#999 0 1px, transparent 1px 2px) 8px 0 / 1px 100% no-repeat;
}
.tree li:last-child { background-size: 12px 1px, 1px 9px; }
.tree li.has {
  background:
    linear-gradient(#222, #222) 6px 9px / 5px 1px no-repeat,
    linear-gradient(#222, #222) 8px 7px / 1px 5px no-repeat,
    linear-gradient(#fff, #fff) 5px 6px / 7px 7px no-repeat,
    linear-gradient(#888, #888) 4px 5px / 9px 9px no-repeat,
    repeating-linear-gradient(90deg, #999 0 1px, transparent 1px 2px) 8px 9px / 12px 1px no-repeat,
    repeating-linear-gradient(#999 0 1px, transparent 1px 2px) 8px 0 / 1px 100% no-repeat;
}
.tree svg { width: 16px; height: 16px; }
.tree .bold { font-weight: 700; }

/* design window */
.design { flex: 1; display: flex; flex-direction: column; min-width: 0; }
.ruler { flex: none; display: flex; height: 28px; }
.ruler span { width: 166px; border-right: 1px solid #a0a0a0; }
.viewport { flex: 1; min-height: 0; margin-left: 2px; border-top: 2px solid #707070; border-left: 2px solid #707070; background: #f7f7f7; }
.model { display: block; width: 100%; height: 100%; }
.mark {
  fill: #dcdcd8;
  font: 62px "Liberation Serif", serif;
  text-shadow: -1px 1px 1px #555, 1px 1px 0 #888;
}
.mark .han { font: 300 67px "Noto Sans CJK SC", sans-serif; }

/* status bar */
.status { flex: none; display: flex; gap: 3px; padding: 1px 0 0 2px; border-top: 1px solid #fafafa; line-height: 15px; }
.ready { flex: 1; }
.pane { padding-left: 2px; border-left: 1px solid #a0a0a0; border-right: 1px solid #fff; box-shadow: inset 0 1px #a0a0a0; white-space: nowrap; }
.caps { width: 28px; }
.num { width: 33px; }
.date { width: 86px; }
.grip { width: 2px; padding: 0; }
```
